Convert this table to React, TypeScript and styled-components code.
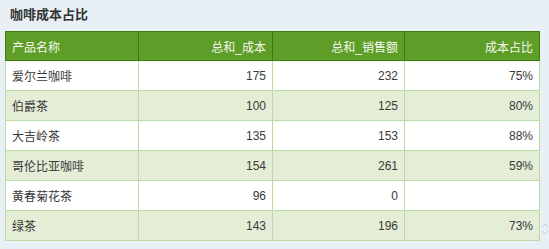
import styled, { createGlobalStyle } from "styled-components";

const GlobalStyle = createGlobalStyle`
  html, body {
    margin: 0;
    padding: 0;
    background: #e9f0f5;
  }
  body {
    font-family: "Liberation Sans", "Noto Sans CJK SC", sans-serif;
  }
`;

const rows = [
  { name: "爱尔兰咖啡", cost: "175", sales: "232", ratio: "75%" },
  { name: "伯爵茶", cost: "100", sales: "125", ratio: "80%" },
  { name: "大吉岭茶", cost: "135", sales: "153", ratio: "88%" },
  { name: "哥伦比亚咖啡", cost: "154", sales: "261", ratio: "59%" },
  { name: "黄春菊花茶", cost: "96", sales: "0", ratio: "" },
  { name: "绿茶", cost: "143", sales: "196", ratio: "73%" },
];

const Panel = styled.div`
  width: 549px;
  height: 249px;
  display: flex;
  flex-direction: column;
  padding: 6px 0 0 5px;
  box-sizing: border-box;
`;

const Title = styled.div`
  height: 25px;
  padding-left: 5px;
  font-size: 13px;
  font-weight: bold;
  color: #333;
  line-height: 18px;
`;

const Body = styled.div`
  display: flex;
  align-items: flex-end;
`;

const Table = styled.table`
  width: 534px;
  border-collapse: collapse;
  table-layout: fixed;
  font-size: 12px;
  color: #3a3a3a;
`;

const HeadCell = styled.th<{ $left?: boolean }>`
  height: 28px;
  padding: 0 6px;
  background: #5e9d27;
  border: 1px solid #3d7a10;
  color: #f4f9ee;
  font-weight: normal;
  text-align: ${(p) => (p.$left ? "left" : "right")};
`;

const Row = styled.tr<{ $alt: boolean }>`
  background: ${(p) => (p.$alt ? "#e4edd6" : "#ffffff")};
`;

const Cell = styled.td<{ $left?: boolean }>`
  height: 29px;
  padding: 0 6px;
  border: 1px solid #bcdaa4;
  text-align: ${(p) => (p.$left ? "left" : "right")};
  white-space: nowrap;
`;

const Spinner = styled.svg`
  margin: 0 0 5px 1px;
  flex: none;
`;

export default function App() {
  return (
    <>
      <GlobalStyle />
      <Panel>
        <Title>咖啡成本占比</Title>
        <Body>
          <Table>
            <colgroup>
              <col style={{ width: 133 }} />
              <col style={{ width: 134 }} />
              <col style={{ width: 132 }} />
              <col style={{ width: 135 }} />
            </colgroup>
            <thead>
              <tr>
                <HeadCell $left>产品名称</HeadCell>
                <HeadCell>总和_成本</HeadCell>
                <HeadCell>总和_销售额</HeadCell>
                <HeadCell>成本占比</HeadCell>
              </tr>
            </thead>
            <tbody>
              {rows.map((r, i) => (
                <Row key={r.name} $alt={i % 2 === 1}>
                  <Cell $left>{r.name}</Cell>
                  <Cell>{r.cost}</Cell>
                  <Cell>{r.sales}</Cell>
                  <Cell>{r.ratio}</Cell>
                </Row>
              ))}
            </tbody>
          </Table>
          <Spinner width="8" height="14" viewBox="0 0 8 14">
            <path d="M1 5 L4 2 L7 5" fill="none" stroke="#c4c8cc" strokeWidth="1" />
            <path d="M1 9 L4 12 L7 9" fill="none" stroke="#c4c8cc" strokeWidth="1" />
          </Spinner>
        </Body>
      </Panel>
    </>
  );
}
